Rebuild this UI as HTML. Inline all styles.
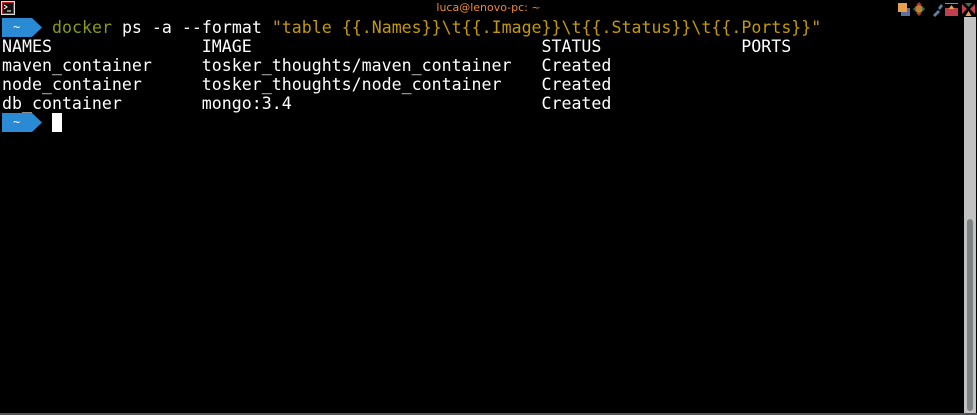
<!DOCTYPE html>
<html><head><style>
body{margin:0;width:977px;height:415px;background:#000;overflow:hidden;position:relative;font-family:"DejaVu Sans Mono","Liberation Mono",monospace;}
.title{position:absolute;top:0;left:0;width:977px;height:16px;text-align:center;font:11px "DejaVu Sans","Liberation Sans",sans-serif;color:#f08a24;line-height:16px;}
.term{position:absolute;left:2px;top:18px;font-size:16.6px;line-height:19px;color:#fff;white-space:pre;}
.badge{display:inline-block;position:relative;width:40px;height:19px;vertical-align:top;}
.g{color:#8a9a16}.o{color:#c49a00}
.sb{position:absolute;left:964px;top:17px;width:12px;height:396px;background:#c2c2c2;}
.th{position:absolute;left:967px;top:219px;width:6px;height:192px;background:#7d8383;border-radius:3px;}
.bb{position:absolute;left:0;top:413px;width:977px;height:2px;background:#555;}
</style></head><body>
<svg style="position:absolute;left:1px;top:1px" width="14" height="14"><rect x="0.5" y="0.5" width="13" height="13" fill="#c42020" stroke="#ddd"/><rect x="2" y="2" width="10" height="10" fill="#111"/><path d="M3 4l3 2-3 2M6 10h4" stroke="#fff" fill="none"/></svg>
<div class="title">luca@lenovo-pc: ~</div>
<svg style="position:absolute;left:896px;top:2px" width="81" height="16">
<rect x="5" y="6" width="9" height="8" fill="#6070a0"/><rect x="2" y="1" width="9" height="9" fill="#e8a050"/>
<circle cx="23" cy="7" r="4" fill="#c08030"/><path d="M23 0l3 3h-6zM23 14l3-3h-6z" fill="#b03040"/><path d="M17 7l3-3v6zM29 7l-3-3v6z" fill="#407050"/>
<path d="M37 13l5-5 2 2-5 5zM42 6l3-4 2 2-3 4z" fill="#6080a0"/>
<rect x="49" y="1" width="13" height="1" fill="#8090c0"/><rect x="49" y="6" width="13" height="8" fill="#c04050"/><path d="M55.5 3l3 4h-6z" fill="#e8a050"/>
<path d="M66 2l5 5-5 5zM79 2l-5 5 5 5z" fill="#c04050"/><path d="M72.5 9l3 5h-6z" fill="#e8a050"/><path d="M69 1h7l-3.5 4z" fill="#407050"/>
</svg>
<div class="term"><span class="badge"><svg width="42" height="19"><path d="M0 0H30L40 9.5 30 19H0z" fill="#2a8ad4"/><text x="11" y="13" fill="#fff" font-size="12" font-family="DejaVu Sans Mono">~</text></svg></span> <span class="g">docker</span> ps -a --format <span class="o">"table {{.Names}}\t{{.Image}}\t{{.Status}}\t{{.Ports}}"</span>
NAMES               IMAGE                             STATUS              PORTS
maven_container     tosker_thoughts/maven_container   Created
node_container      tosker_thoughts/node_container    Created
db_container        mongo:3.4                         Created
<span class="badge"><svg width="42" height="19"><path d="M0 0H30L40 9.5 30 19H0z" fill="#2a8ad4"/><text x="11" y="13" fill="#fff" font-size="12" font-family="DejaVu Sans Mono">~</text></svg></span> <span style="background:#fff"> </span></div>
<div class="sb"></div><div class="th"></div><div class="bb"></div>
</body></html>
